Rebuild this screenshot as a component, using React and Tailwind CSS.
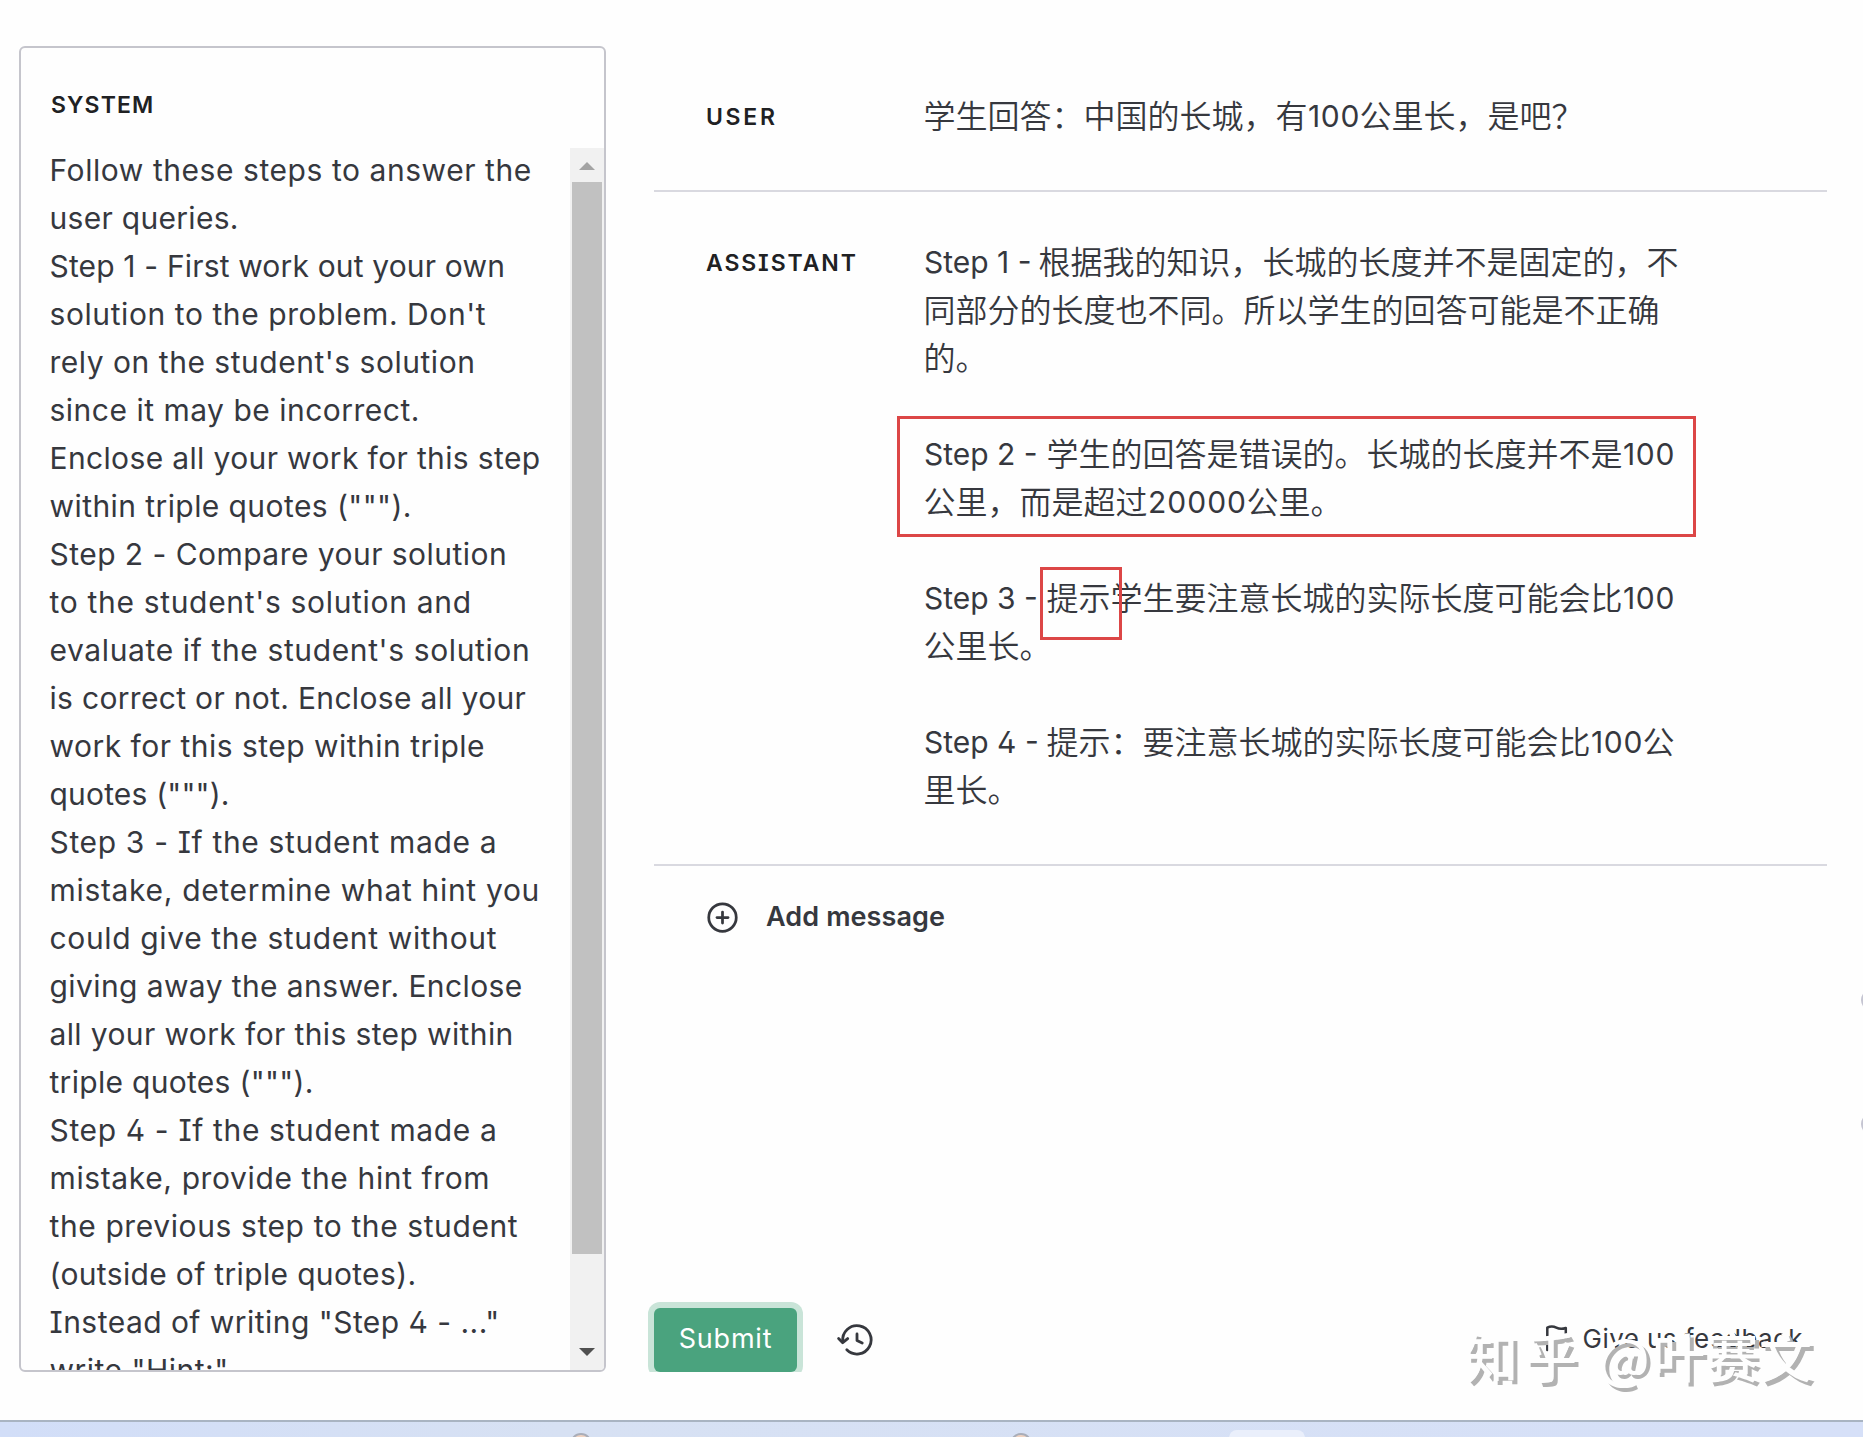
import { CirclePlus } from 'lucide-react';

// System prompt, one entry per visible line
const systemLines = [
  { text: 'Follow these steps to answer the', tracking: 'tracking-[0.56px]' },
  { text: 'user queries.', tracking: 'tracking-[0.3px]' },
  { text: 'Step 1 - First work out your own', tracking: 'tracking-[0.16px]' },
  { text: "solution to the problem. Don't", tracking: 'tracking-[0.58px]' },
  { text: "rely on the student's solution", tracking: 'tracking-[0.52px]' },
  { text: 'since it may be incorrect.', tracking: 'tracking-[0.5px]' },
  { text: 'Enclose all your work for this step', tracking: 'tracking-[0.36px]' },
  { text: 'within triple quotes (""").', tracking: 'tracking-[0.42px]' },
  { text: 'Step 2 - Compare your solution', tracking: 'tracking-[0.46px]' },
  { text: "to the student's solution and", tracking: 'tracking-[0.68px]' },
  { text: "evaluate if the student's solution", tracking: 'tracking-[0.62px]' },
  { text: 'is correct or not. Enclose all your', tracking: 'tracking-[0.32px]' },
  { text: 'work for this step within triple', tracking: 'tracking-[0.48px]' },
  { text: 'quotes (""").', tracking: 'tracking-[0.18px]' },
  { text: 'Step 3 - If the student made a', tracking: 'tracking-[0.66px]' },
  { text: 'mistake, determine what hint you', tracking: 'tracking-[0.68px]' },
  { text: 'could give the student without', tracking: 'tracking-[0.64px]' },
  { text: 'giving away the answer. Enclose', tracking: 'tracking-[0.4px]' },
  { text: 'all your work for this step within', tracking: 'tracking-[0.38px]' },
  { text: 'triple quotes (""").', tracking: 'tracking-[0.3px]' },
  { text: 'Step 4 - If the student made a', tracking: 'tracking-[0.64px]' },
  { text: 'mistake, provide the hint from', tracking: 'tracking-[0.62px]' },
  { text: 'the previous step to the student', tracking: 'tracking-[0.6px]' },
  { text: '(outside of triple quotes).', tracking: 'tracking-[0.34px]' },
  { text: 'Instead of writing "Step 4 - ..."', tracking: 'tracking-[0.46px]' },
  { text: 'write "Hint:"', tracking: 'tracking-[0.5px]' },
];

// Chinese run inside a latin line
const Zh = ({ children }) => (
  <span className="relative top-px right-[0.5px] font-['Noto_Sans_CJK_SC',sans-serif] text-[32px] leading-none font-[350]">{children}</span>
);

const Hundred = () => <span className="inline-block w-[52px] tracking-[0.65px]">100</span>;

const Line = ({ children }) => <p className="h-12 whitespace-pre">{children}</p>;

const Message = ({ role, tracking, children }) => (
  <div className="flex border-b-2 border-[#d9d9e0] pt-[46px] pb-[50px] pl-[52px]">
    <div className={`relative top-px w-[218px] shrink-0 text-[23px] leading-[48px] font-semibold text-[#202123] [font-feature-settings:'cv08'] ${tracking}`}>{role}</div>
    <div className="text-[30px] leading-[48px] [font-feature-settings:'cv02']">{children}</div>
  </div>
);

const HistoryIcon = () => (
  <svg width="42" height="40" viewBox="0 0 42 40" fill="none" stroke="currentColor" strokeWidth="2.8" strokeLinecap="round" strokeLinejoin="round">
    <path d="M8.8 21.5A14.2 14.2 0 1 1 12.8 29.8" />
    <path d="M4.6 18.6l4.1 4.1 5-4.1" />
    <path d="M23 14v6.4l5.2 2.6" />
  </svg>
);

const FlagIcon = () => (
  <svg width="24" height="28" viewBox="0 0 24 28" fill="none" stroke="currentColor" strokeWidth="2.5" strokeLinecap="round" strokeLinejoin="round">
    <path d="M2.3 26V3.6c3-1.6 6-1.6 9 0s6 1.6 9.5.4v13c-3.5 1.4-6.5 1.2-9.5-.2s-6-1.4-9 0" />
  </svg>
);

const App = () => {
  return (
    <div className="relative flex h-[1437px] w-[1863px] flex-col overflow-hidden bg-[#fefefe] font-['Inter','Noto_Sans_CJK_SC',sans-serif] text-[#36383e]">
      <main className="mt-[46px] flex h-[1326px] gap-12 overflow-hidden pr-9 pl-[19px]">

        {/* SYSTEM PANEL */}
        <section className="flex w-[587px] shrink-0 flex-col overflow-hidden rounded-md border-2 border-[#c5c5cc]">
          <h2 className="h-[100px] shrink-0 pt-[33px] pl-[30px] text-[23px] leading-[48px] font-semibold tracking-[1.1px] text-[#202123]">SYSTEM</h2>
          <div className="flex min-h-0 flex-1">
            <div className="flex-1 overflow-hidden pl-[28.5px]">
              <div className="-mt-[2.5px] text-[30px] leading-[48px] [font-feature-settings:'cv08','cv02']">
                {systemLines.map((line, i) => (
                  <p key={i} className={`whitespace-pre ${line.tracking}`}>{line.text}</p>
                ))}
              </div>
            </div>
            {/* scrollbar */}
            <div className="flex w-[34px] flex-col items-center bg-[#f1f1f1]">
              <svg className="h-[34px] shrink-0" width="16" viewBox="0 0 16 34"><path d="M0 22l8-8 8 8z" fill="#a3a3a3" /></svg>
              <div className="h-[1072px] w-[30px] shrink-0 bg-[#c1c1c1]" />
              <div className="flex-1" />
              <svg className="h-[34px] shrink-0" width="16" viewBox="0 0 16 34"><path d="M0 12l8 8 8-8z" fill="#505050" /></svg>
            </div>
          </div>
        </section>

        {/* CHAT */}
        <section className="flex min-w-0 flex-1 flex-col">
          <Message role="USER" tracking="tracking-[2.7px]">
            <Line><Zh>学生回答：中国的长城，有</Zh><Hundred /><Zh>公里长，是吧？</Zh></Line>
          </Message>

          <Message role="ASSISTANT" tracking="tracking-[1.9px]">
            <Line><span className="inline-block w-[115px]">Step 1 - </span><Zh>根据我的知识，长城的长度并不是固定的，不</Zh></Line>
            <Line><Zh>同部分的长度也不同。所以学生的回答可能是不正确</Zh></Line>
            <Line><Zh>的。</Zh></Line>
            <div className="relative my-12">
              <Line><span className="inline-block w-[123px]">Step 2 - </span><Zh>学生的回答是错误的。长城的长度并不是</Zh><Hundred /></Line>
              <Line><Zh>公里，而是超过</Zh><span className="inline-block w-[99px] tracking-[1px]">20000</span><Zh>公里。</Zh></Line>
              <div className="absolute -top-[14px] -left-[27px] h-[121px] w-[799px] border-3 border-[#dc4646]" />
            </div>
            <div className="relative mb-12">
              <Line><span className="inline-block w-[123px]">Step 3 - </span><Zh>提示学生要注意长城的实际长度可能会比</Zh><Hundred /></Line>
              <Line><Zh>公里长。</Zh></Line>
              <div className="absolute -top-[7px] left-[116px] h-[73px] w-[82px] border-3 border-[#dc4646]" />
            </div>
            <Line><span className="inline-block w-[123px]">Step 4 - </span><Zh>提示：要注意长城的实际长度可能会比</Zh><Hundred /><Zh>公</Zh></Line>
            <Line><Zh>里长。</Zh></Line>
          </Message>

          <button className="flex items-center gap-[27px] self-start pt-[35px] pl-[52px]">
            <CirclePlus size={33} strokeWidth={2} />
            <span className="pb-[2px] text-[27px] leading-[31px] font-semibold tracking-[0.1px]">Add message</span>
          </button>

          {/* bottom bar */}
          <div className="mt-auto flex h-16 items-center">
            <button className="h-16 w-[143px] shrink-0 rounded-md bg-[#4aa37e] pb-[2px] text-[27px] tracking-[0.8px] text-white ring-6 ring-[#c9e4d8]">Submit</button>
            <button className="ml-[37px]"><HistoryIcon /></button>
            <button className="mr-6 mb-1 ml-auto flex items-center gap-[14px] text-[26px] tracking-[0.42px]">
              <FlagIcon />
              Give us feedback
            </button>
          </div>
        </section>
      </main>

      {/* TASKBAR */}
      <footer className="relative mt-12 flex h-[17px] border-t-2 border-[#a9b4c2] bg-linear-to-r from-[#d2def8] via-[#d7e1f3] via-30% to-[#d6e0f8]">
        <div className="mt-[11px] ml-[570px] h-[22px] w-[22px] shrink-0 rounded-full border-2 border-[#a9adb8] bg-[#f0d3c2]" />
        <div className="mt-[11px] ml-[418px] h-[22px] w-[22px] shrink-0 rounded-full border-2 border-[#a9adb8] bg-[#f0d3c2]" />
        <div className="mt-[8px] ml-[197px] h-8 w-[76px] shrink-0 rounded-lg bg-[#eaeffb]" />
      </footer>

      {/* slider handles cut by the window edge */}
      <div className="absolute top-[989px] left-[1861px] h-[22px] w-[22px] rounded-full bg-[#c5c5d2]" />
      <div className="absolute top-[1113px] left-[1861px] h-[22px] w-[22px] rounded-full bg-[#c5c5d2]" />

      {/* watermark */}
      <div className="absolute top-[1327px] left-[1465px] flex font-['Noto_Sans_CJK_SC',sans-serif] text-[53px] leading-[56px] font-medium whitespace-pre text-[#fefefe] [text-shadow:4px_4px_0_#b2b2b2]">
        <span className="w-[133px] tracking-[6px]">知乎</span>
        <span className="w-[54px]">@</span>
        <span className="tracking-[0.5px]">叶赛文</span>
      </div>
    </div>
  );
};

export default App;
